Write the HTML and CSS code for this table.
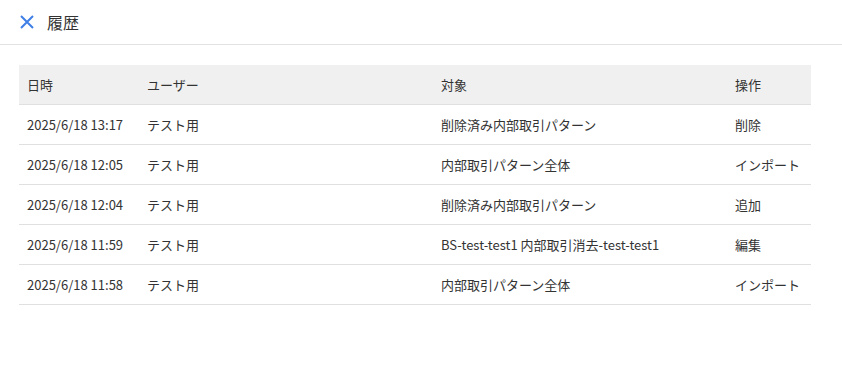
FILE: index.html
```html
<!DOCTYPE html>
<html lang="ja">
<head>
<meta charset="utf-8">
<link rel="stylesheet" href="styles.css">
</head>
<body>
<header class="bar">
  <svg class="close" width="16" height="16" viewBox="0 0 16 16"><path d="M2 2L14 14M14 2L2 14" stroke="#3f7fe6" stroke-width="2" fill="none"/></svg>
  <h1 class="title">履歴</h1>
</header>
<main class="content">
  <table class="history">
    <colgroup><col class="c1"><col class="c2"><col class="c3"><col class="c4"></colgroup>
    <thead>
      <tr><th>日時</th><th>ユーザー</th><th>対象</th><th>操作</th></tr>
    </thead>
    <tbody>
      <tr><td>2025/6/18 13:17</td><td>テスト用</td><td>削除済み内部取引パターン</td><td>削除</td></tr>
      <tr><td>2025/6/18 12:05</td><td>テスト用</td><td>内部取引パターン全体</td><td>インポート</td></tr>
      <tr><td>2025/6/18 12:04</td><td>テスト用</td><td>削除済み内部取引パターン</td><td>追加</td></tr>
      <tr><td>2025/6/18 11:59</td><td>テスト用</td><td>BS-test-test1 内部取引消去-test-test1</td><td>編集</td></tr>
      <tr><td>2025/6/18 11:58</td><td>テスト用</td><td>内部取引パターン全体</td><td>インポート</td></tr>
    </tbody>
  </table>
</main>
</body>
</html>
```
FILE: styles.css
```css
* { box-sizing: border-box; }
html, body { margin: 0; padding: 0; background: #fff; }
body {
  font-family: "Noto Sans CJK JP", "Noto Sans", sans-serif;
  color: #333;
  font-size: 13px;
}
.bar {
  height: 45px;
  display: flex;
  align-items: center;
  padding-left: 19px;
  border-bottom: 1px solid #e2e2e2;
}
.close { display: block; margin-right: 12px; }
.title {
  margin: 0;
  font-size: 16px;
  font-weight: 400;
  color: #333;
}
.content { padding: 20px 31px 0 19px; }
.history {
  width: 792px;
  border-collapse: collapse;
  table-layout: fixed;
}
.c1 { width: 120px; }
.c2 { width: 294px; }
.c3 { width: 294px; }
.c4 { width: 84px; }
.history th, .history td {
  height: 40px;
  padding: 0 8px;
  text-align: left;
  font-weight: 400;
  border-bottom: 1px solid #e0e0e0;
  white-space: nowrap;
}
.history thead th { background: #f0f0f0; height: 39px; }
```
